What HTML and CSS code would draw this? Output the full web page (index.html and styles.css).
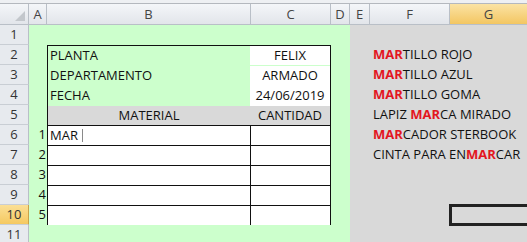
FILE: index.html
```html
<!DOCTYPE html>
<html lang="es">
<head>
  <meta charset="UTF-8">
  <title>Hoja - Material</title>
  <link rel="stylesheet" href="styles.css">
</head>
<body>
  <div class="topbar"></div>
  <div class="sheet">
    <div class="rowheads">
      <div class="corner"><span class="tri"></span></div>
      <div class="rh">1</div>
      <div class="rh">2</div>
      <div class="rh">3</div>
      <div class="rh">4</div>
      <div class="rh">5</div>
      <div class="rh">6</div>
      <div class="rh">7</div>
      <div class="rh">8</div>
      <div class="rh">9</div>
      <div class="rh sel">10</div>
      <div class="rh">11</div>
    </div>
    <div class="main">
      <div class="colheads">
        <div class="ch col-a">A</div>
        <div class="ch col-b">B</div>
        <div class="ch col-c">C</div>
        <div class="ch col-d">D</div>
        <div class="ch col-e">E</div>
        <div class="ch col-f">F</div>
        <div class="ch col-g sel">G</div>
      </div>
      <div class="body">
        <div class="green">
          <div class="idx">
            <div>1</div>
            <div>2</div>
            <div>3</div>
            <div>4</div>
            <div>5</div>
          </div>
          <div class="form">
            <div class="cell lbl r19">PLANTA</div>
            <div class="cell val r19">FELIX</div>
            <div class="cell lbl">DEPARTAMENTO</div>
            <div class="cell val">ARMADO</div>
            <div class="cell lbl">FECHA</div>
            <div class="cell val">24/06/2019</div>
            <div class="cell head line">MATERIAL</div>
            <div class="cell head line">CANTIDAD</div>
            <div class="cell item line">MAR<span class="caret"></span></div>
            <div class="cell qty line"></div>
            <div class="cell item line"></div>
            <div class="cell qty line"></div>
            <div class="cell item line"></div>
            <div class="cell qty line"></div>
            <div class="cell item line"></div>
            <div class="cell qty line"></div>
            <div class="cell item r19"></div>
            <div class="cell qty r19"></div>
          </div>
        </div>
        <div class="gray">
          <ul class="list">
            <li><b>MAR</b>TILLO ROJO</li>
            <li><b>MAR</b>TILLO AZUL</li>
            <li><b>MAR</b>TILLO GOMA</li>
            <li>LAPIZ <b>MAR</b>CA MIRADO</li>
            <li><b>MAR</b>CADOR STERBOOK</li>
            <li>CINTA PARA EN<b>MAR</b>CAR</li>
          </ul>
          <div class="selected"></div>
        </div>
      </div>
    </div>
  </div>
</body>
</html>
```

FILE: styles.css
```css
:root {
  --green: #ccffcc;
  --gray: #d9d9d9;
  --head-border: #b9bfc7;
  --text: #111;
}
body {
  margin: 0;
  width: 527px;
  height: 242px;
  overflow: hidden;
  font-family: "Open Sans", sans-serif;
  font-size: 13px;
  color: var(--text);
  background: #fff;
}
.topbar {
  height: 3px;
  background: #eef0f3;
  border-bottom: 1px solid #b4b8be;
}
.sheet {
  display: flex;
  height: 238px;
  overflow: hidden;
}

/* row headers */
.rowheads {
  width: 29px;
  flex: none;
}
.corner {
  height: 21px;
  box-sizing: border-box;
  background: linear-gradient(#f4f6f9, #e2e5ea);
  border-right: 1px solid var(--head-border);
  border-bottom: 1px solid var(--head-border);
  position: relative;
}
.tri {
  position: absolute;
  right: 3px;
  bottom: 3px;
  width: 0;
  height: 0;
  border-left: 10px solid transparent;
  border-bottom: 10px solid #c3c7cc;
}
.rh {
  height: 20px;
  box-sizing: border-box;
  line-height: 19px;
  text-align: center;
  color: #333;
  background: #e7eaee;
  border-right: 1px solid var(--head-border);
  border-bottom: 1px solid #c9ced4;
}
.rh.sel {
  background: linear-gradient(#fbdf95, #f5c961);
  border-right-color: #c9a34a;
}

/* column headers */
.main {
  flex: 1;
}
.colheads {
  display: flex;
  height: 21px;
  box-sizing: border-box;
  background: linear-gradient(#f4f6f9, #e2e5ea);
  border-bottom: 1px solid var(--head-border);
}
.ch {
  box-sizing: border-box;
  line-height: 20px;
  text-align: center;
  color: #444;
  border-right: 1px solid var(--head-border);
}
.ch.sel {
  background: linear-gradient(#fbe3a4, #f3c662);
  border-right: none;
}
.col-a { width: 18px; }
.col-b { width: 204px; }
.col-c { width: 80px; }
.col-d { width: 19px; }
.col-e { width: 20px; }
.col-f { width: 80px; }
.col-g { flex: 1; }

/* cells area */
.body {
  display: flex;
  height: 217px;
}
.green {
  width: 321px;
  flex: none;
  background: var(--green);
  display: flex;
  align-items: flex-start;
  padding-top: 20px;
  box-sizing: border-box;
}
.idx {
  width: 18px;
  padding-top: 80px;
}
.idx div {
  height: 20px;
  line-height: 19px;
  text-align: right;
  padding-right: 1px;
}
.form {
  width: 284px;
  height: 180px;
  box-sizing: border-box;
  border: 1px solid #111;
  display: grid;
  grid-template-columns: 202px 80px;
  grid-auto-rows: 20px;
}
.cell {
  box-sizing: border-box;
  line-height: 19px;
  white-space: nowrap;
  height: 20px;
}
.cell.r19 {
  height: 19px;
  line-height: 18px;
}
.lbl {
  padding-left: 2px;
}
.val {
  background: #fff;
  text-align: center;
}
.head {
  background: var(--gray);
  text-align: center;
}
.item,
.qty {
  background: #fff;
}
.item {
  padding-left: 2px;
}
.qty {
  border-left: 1px solid #111;
}
.line {
  border-bottom: 1px solid #111;
}
.caret {
  display: inline-block;
  width: 1px;
  height: 13px;
  margin-left: 4px;
  vertical-align: -2px;
  background: #8a8a8a;
}

.gray {
  flex: 1;
  background: var(--gray);
  padding-top: 20px;
  box-sizing: border-box;
}
.list {
  list-style: none;
  margin: 0;
  padding: 0 0 0 23px;
}
.list li {
  height: 20px;
  line-height: 19px;
  white-space: nowrap;
}
.list b {
  color: #e3161f;
}
.selected {
  margin: 39px 0 0 99px;
  height: 22px;
  box-sizing: border-box;
  border: 3px solid #222;
  border-right: none;
}
```
